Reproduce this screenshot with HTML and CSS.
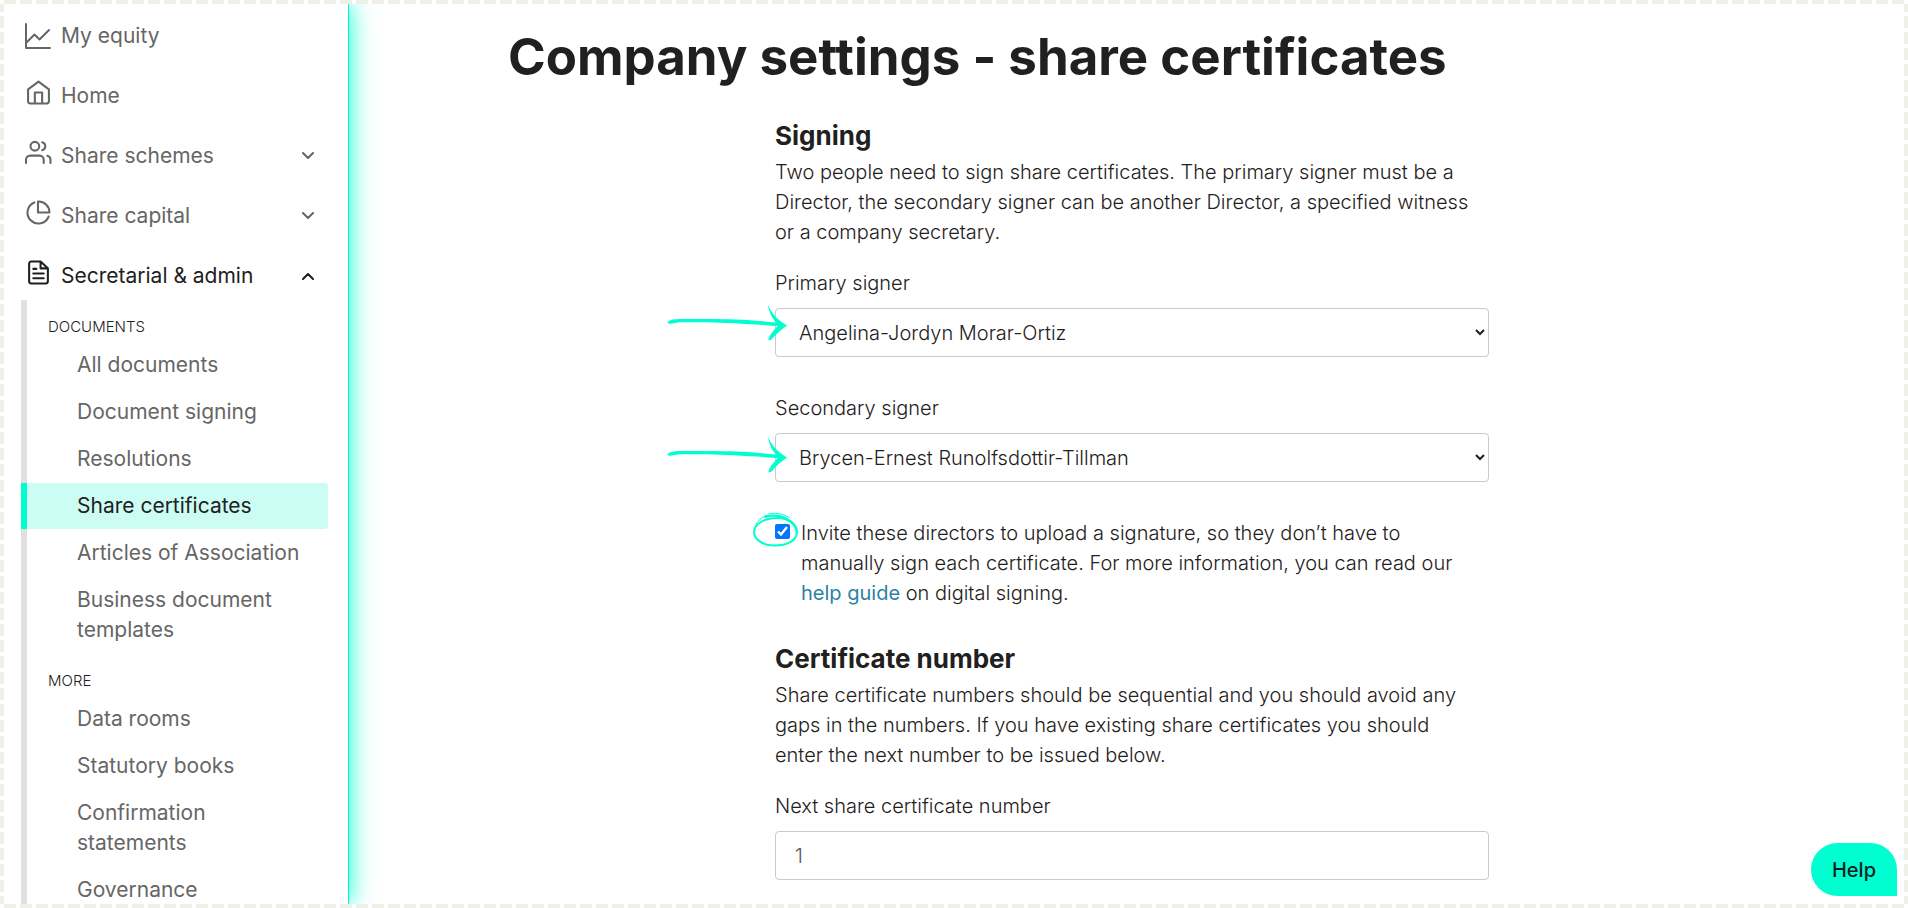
FILE: index.html
```html
<!DOCTYPE html>
<html lang="en">
<head>
    <meta charset="UTF-8">
    <meta name="viewport" content="width=device-width, initial-scale=1.0">
    <title>Company settings - share certificates</title>

    <link rel="stylesheet" href="styles.css">
</head>
<body>
    <div class="app">
        <nav class="sidebar">
            <a href="#" class="nav-item">
                <svg class="icon icon-chart" viewBox="0 0 25 25"><path d="M0 0v24h24M1 18l7.500-7.500 5 5L23 6"/></svg>
                <span>My equity</span>
            </a>
            <a href="#" class="nav-item">
                <svg class="icon" viewBox="0 0 24 24"><path d="M2 9l10-7.500L22 9v11.500a2 2 0 0 1-2 2H4a2 2 0 0 1-2-2zM8.500 22V12h7v10"/></svg>
                <span>Home</span>
            </a>
            <a href="#" class="nav-item">
                <svg class="icon" viewBox="0 0 24 24"><path d="M17 22v-3a4 4 0 0 0-4-4H4a4 4 0 0 0-4 4v3M23.500 22v-3a4 4 0 0 0-3-3.870M15.500 2.130a4 4 0 0 1 0 7.750"/><circle cx="8.500" cy="6" r="4.200"/></svg>
                <span>Share schemes</span>
                <svg class="chevron" viewBox="0 0 12 8"><path d="M1 1l5 5 5-5"/></svg>
            </a>
            <a href="#" class="nav-item">
                <svg class="icon" viewBox="0 0 24 24"><path d="M21.700 15.890A10.500 10.500 0 1 1 8 2.330M22.500 12A10.500 10.500 0 0 0 11.500 1.500V12z"/></svg>
                <span>Share capital</span>
                <svg class="chevron" viewBox="0 0 12 8"><path d="M1 1l5 5 5-5"/></svg>
            </a>
            <a href="#" class="nav-item open">
                <svg class="icon" viewBox="0 0 24 24"><path d="M14 1.500H5a2 2 0 0 0-2 2v17a2 2 0 0 0 2 2h14a2 2 0 0 0 2-2V8zM14 2v6h6M17 13H7M17 17.500H7M10 8.500H7"/></svg>
                <span>Secretarial &amp; admin</span>
                <svg class="chevron" viewBox="0 0 12 8"><path d="M1 7l5-5 5 5"/></svg>
            </a>

            <div class="submenu">
                <h3>Documents</h3>
                <a href="#">All documents</a>
                <a href="#">Document signing</a>
                <a href="#">Resolutions</a>
                <a href="#" class="active">Share certificates</a>
                <a href="#">Articles of Association</a>
                <a href="#">Business document templates</a>
                <h3>More</h3>
                <a href="#">Data rooms</a>
                <a href="#">Statutory books</a>
                <a href="#">Confirmation statements</a>
                <a href="#">Governance</a>
            </div>
        </nav>

        <main class="content">
            <h1>Company settings - share certificates</h1>

            <form class="settings-form">
                <h2>Signing</h2>
                <p>Two people need to sign share certificates. The primary signer must be a Director, the secondary signer can be another Director, a specified witness or a company secretary.</p>

                <label for="primarySigner">Primary signer</label>
                <div class="field">
                    <select id="primarySigner">
                        <option>Angelina-Jordyn Morar-Ortiz</option>
                    </select>
                    <svg class="arrow" viewBox="0 0 120 36">
                        <path d="M.5 17.500C2 15 6 14.300 12 14L50 14C75 14.500 92 15.500 112 18L120 21L108 21C85 19 60 17.700 40 17.200L12 17.200C8 18 4 19 1 18.500Z"/>
                        <path d="M101 0C104 7 109 14 120 20.500L113 21C106 16 102 8 101 0Z"/>
                        <path d="M120 20.500C114 25 109 29 105 34C104 35.500 101 36 101.500 34C103 30 107 24 112 20Z"/>
                    </svg>
                </div>

                <label for="secondarySigner">Secondary signer</label>
                <div class="field">
                    <select id="secondarySigner">
                        <option>Brycen-Ernest Runolfsdottir-Tillman</option>
                    </select>
                    <svg class="arrow arrow-lower" viewBox="0 0 120 36">
                        <path d="M.5 17.500C2 15 6 14.300 12 14L50 14C75 14.500 92 15.500 112 18L120 21L108 21C85 19 60 17.700 40 17.200L12 17.200C8 18 4 19 1 18.500Z"/>
                        <path d="M101 0C104 7 109 14 120 20.500L113 21C106 16 102 8 101 0Z"/>
                        <path d="M120 20.500C114 25 109 29 105 34C104 35.500 101 36 101.500 34C103 30 107 24 112 20Z"/>
                    </svg>
                </div>

                <div class="check-row">
                    <input type="checkbox" id="inviteDirectors" checked>
                    <label for="inviteDirectors">Invite these directors to upload a signature, so they don’t have to manually sign each certificate. For more information, you can read our <a href="#">help guide</a> on digital signing.</label>
                    <svg class="circle" viewBox="0 0 45 36">
                        <path class="thick" d="M12 5C27 1 44 9 44 20C44 29 33 33.500 22 33.500C9 33.500 1 27 1 20C1 12 12 6 24 6C36 6 43.500 13 43.500 21"/>
                        <path d="M16 1.500C24 .500 32 2.500 37 6M1.500 23C0 14 6 5 15 3M5 28C12 35 33 36 42 27M12 4C20 2 30 3 35 7"/>
                    </svg>
                </div>

                <h2>Certificate number</h2>
                <p>Share certificate numbers should be sequential and you should avoid any gaps in the numbers. If you have existing share certificates you should enter the next number to be issued below.</p>

                <label for="nextNumber">Next share certificate number</label>
                <div class="field">
                    <input type="text" id="nextNumber" value="1">
                </div>
            </form>
        </main>
    </div>

    <button type="button" class="help-btn">Help</button>
</body>
</html>
```
FILE: styles.css
```css
/* General Styles */
* {
    box-sizing: border-box;
}

body {
    margin: 0;
    padding: 4px;
    height: 100vh;
    overflow: hidden;
    font-family: Inter, "Open Sans", sans-serif;
    font-size: 20px;
    font-weight: 300;
    line-height: 30px;
    color: #1f2120;
    /* dashed frame round the page */
    background:
        repeating-linear-gradient(to right, #fff 0 4px, #f1f0e8 4px 16px) 0 0 / 100% 4px no-repeat,
        repeating-linear-gradient(to right, #fff 0 4px, #f1f0e8 4px 16px) 0 100% / 100% 4px no-repeat,
        repeating-linear-gradient(to bottom, #f1f0e8 0 12px, #fff 12px 16px) 0 0 / 4px 100% no-repeat,
        repeating-linear-gradient(to bottom, #f1f0e8 0 12px, #fff 12px 16px) 100% 0 / 4px 100% no-repeat,
        #fff;
}

.app {
    display: flex;
    height: 100%;
    overflow: hidden;
}

/* Sidebar */
.sidebar {
    flex: 0 0 345px;
    padding: 2px 20px 0 17px;
    border-right: 1px solid #00f5c8;
    box-shadow: 0 0 24px #00ffd0;
}

.sidebar a {
    color: #666;
    font-size: 21px;
    font-weight: 400;
    text-decoration: none;
}

.nav-item {
    display: flex;
    align-items: center;
    gap: 10px;
    height: 60px;
    padding: 0 14px 0 5px;
}

.icon {
    width: 25px;
    height: 25px;
    margin-bottom: 8px;
    overflow: visible;
}

.icon-chart {
    margin-bottom: 0;
}

.icon,
.chevron {
    fill: none;
    stroke: currentColor;
    stroke-width: 2;
    stroke-linecap: round;
    stroke-linejoin: round;
}

.chevron {
    width: 12px;
    height: 8px;
    margin-left: auto;
}

.sidebar .open,
.sidebar .active {
    color: #1f2120;
}

/* Submenu */
.submenu {
    display: flex;
    flex-direction: column;
    gap: 1px;
    min-height: 100%;
    margin-top: -6px;
    border-left: 6px solid #dee1e0;
}

.submenu h3 {
    margin: 0;
    padding: 17px 0 4px 21px;
    font-size: 15px;
    font-weight: 300;
    line-height: 20px;
    text-transform: uppercase;
}

.submenu a {
    padding: 8px 20px 8px 50px;
}

.submenu .active {
    margin-left: -6px;
    border-left: 6px solid #00ffd0;
    border-radius: 0 3px 3px 0;
    background: #ccfdf4;
}

/* Main Content */
.content {
    flex: 1;
    padding: 22px 159px 0;
}

h1 {
    margin: 0 0 32px;
    font-size: 51px;
    font-weight: 700;
    line-height: 62px;
}

h2 {
    margin: 0 0 5px;
    font-size: 26px;
    font-weight: 700;
    line-height: 32px;
}

.settings-form {
    max-width: 714px;
    margin-left: 267px;
}

.settings-form p {
    margin: 0 0 21px;
    padding-right: 12px;
}

.settings-form label {
    display: block;
}

/* Fields */
.field {
    position: relative;
    margin: 10px 0 36px;
}

.field select,
.field input {
    display: block;
    width: 100%;
    height: 49px;
    border: 1px solid #c8cbc9;
    border-radius: 4px;
    background: #fff;
    color: inherit;
    font: inherit;
}

.field select {
    padding: 0 0 0 19px;
}

.field input {
    padding: 0 19px;
    color: #555;
}

.check-row {
    position: relative;
    display: flex;
    align-items: flex-start;
    gap: 11px;
    margin-bottom: 35px;
}

.check-row input {
    flex: none;
    width: 15px;
    height: 15px;
    margin: 6px 0 0;
    accent-color: #0075ff;
}

.check-row a {
    color: #2a83a5;
    font-weight: 400;
    text-decoration: none;
}

/* Hand drawn marks over the form */
.arrow {
    position: absolute;
    top: -3px;
    left: -108px;
    width: 120px;
    height: 36px;
    fill: #00ffd0;
}

.arrow-lower {
    top: 4px;
}

.circle {
    position: absolute;
    top: -6px;
    left: -22px;
    width: 45px;
    height: 36px;
    fill: none;
    stroke: #00ffd0;
    stroke-linecap: round;
    pointer-events: none;
}

.circle .thick {
    stroke-width: 2;
}

/* Help Button */
.help-btn {
    position: fixed;
    right: 11px;
    bottom: 12px;
    width: 86px;
    height: 53px;
    padding: 0;
    border: none;
    border-radius: 27px 27px 0 27px;
    background: #00ffd0;
    color: #10201c;
    font: inherit;
    font-weight: 500;
    cursor: pointer;
}
```
